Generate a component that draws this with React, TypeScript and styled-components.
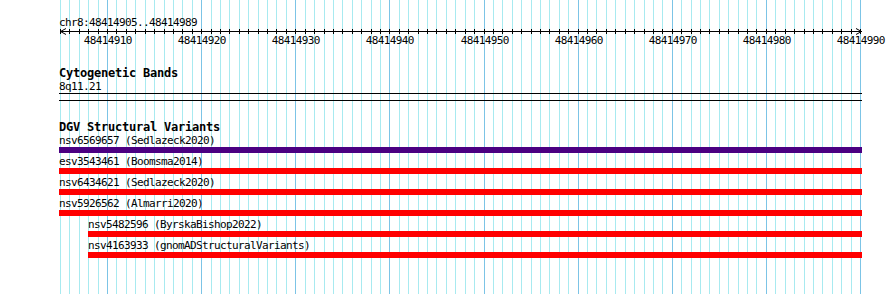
import React from "react";
import styled, { createGlobalStyle } from "styled-components";

const START = 48414905;
const ORIGIN = 60;
const BP_COUNT = 85;
const BP_WIDTH = 800 / BP_COUNT;
const TRACK_LEFT = 59;

const GlobalStyle = createGlobalStyle`
  body {
    margin: 0;
    background: #fff;
  }
`;

const Page = styled.div`
  position: relative;
  width: 890px;
  height: 294px;
  overflow: hidden;
  font-family: "DejaVu Sans Mono", "Liberation Mono", monospace;
  color: #000;
`;

const GridLayer = styled.svg`
  position: absolute;
  left: 0;
  top: 0;
  z-index: 0;
`;

const Content = styled.div`
  position: relative;
  z-index: 1;
  width: 803px;
  padding: 16px 0 0 ${TRACK_LEFT}px;
  display: flex;
  flex-direction: column;
`;

const Label = styled.div`
  font-size: 11px;
  line-height: 13px;
  letter-spacing: -0.62px;
  white-space: nowrap;
`;

const TrackTitle = styled.div`
  margin-top: 20px;
  font-size: 12px;
  font-weight: bold;
  line-height: 13px;
  letter-spacing: -0.22px;
  white-space: nowrap;
`;

const Ruler = styled.svg`
  display: block;
  overflow: visible;
`;

const BandLines = styled.div`
  height: 6px;
  border-top: 1px solid #000;
  border-bottom: 1px solid #000;
`;

const FeatureRow = styled.div<{ $indent: number }>`
  display: flex;
  flex-direction: column;
  padding-left: ${(p) => p.$indent}px;
  margin-bottom: 2px;
`;

const Bar = styled.div<{ $color: string }>`
  height: 6px;
  background: ${(p) => p.$color};
`;

const features = [
  { name: "nsv6569657 (Sedlazeck2020)", color: "#4b0082", indent: 0 },
  { name: "esv3543461 (Boomsma2014)", color: "#ff0000", indent: 0 },
  { name: "nsv6434621 (Sedlazeck2020)", color: "#ff0000", indent: 0 },
  { name: "nsv5926562 (Almarri2020)", color: "#ff0000", indent: 0 },
  { name: "nsv5482596 (ByrskaBishop2022)", color: "#ff0000", indent: 29 },
  { name: "nsv4163933 (gnomADStructuralVariants)", color: "#ff0000", indent: 29 },
];

const gridX = (k: number) => Math.round(ORIGIN + k * BP_WIDTH) + 0.5;

function Grid() {
  const lines = [];
  for (let k = 0; k <= BP_COUNT; k++) {
    const major = k % 10 === 5;
    lines.push(
      <line
        key={k}
        x1={gridX(k)}
        x2={gridX(k)}
        y1={0}
        y2={294}
        stroke={major ? "#7cc4e6" : "#a8eaf0"}
        strokeWidth={1}
      />
    );
  }
  return (
    <GridLayer width={890} height={294} shapeRendering="crispEdges">
      {lines}
    </GridLayer>
  );
}

function ScaleBar() {
  const ticks = [];
  const labels = [];
  for (let k = 0; k <= BP_COUNT; k++) {
    const x = gridX(k) - TRACK_LEFT;
    ticks.push(<line key={k} x1={x} x2={x} y1={0} y2={5} stroke="#000" />);
    if (k % 10 === 5) {
      labels.push(
        <text
          key={k}
          x={x + 0.3}
          y={15}
          textAnchor="middle"
          fontSize={11}
          letterSpacing={-0.62}
          fontFamily='"DejaVu Sans Mono", monospace'
        >
          {START + k}
        </text>
      );
    }
  }
  const left = ORIGIN - TRACK_LEFT;
  const right = 861 - TRACK_LEFT;
  return (
    <Ruler width={803} height={18}>
      <g shapeRendering="crispEdges">
        <line x1={left} x2={right + 1} y1={2.5} y2={2.5} stroke="#000" />
        {ticks}
      </g>
      <polyline
        points={`${left + 6},-0.5 ${left + 0.5},2.5 ${left + 6},5.5`}
        fill="none"
        stroke="#000"
      />
      <polyline
        points={`${right - 5},-0.5 ${right + 0.5},2.5 ${right - 5},5.5`}
        fill="none"
        stroke="#000"
      />
      {labels}
    </Ruler>
  );
}

export default function App() {
  return (
    <Page>
      <GlobalStyle />
      <Grid />
      <Content>
        <Label>chr8:48414905..48414989</Label>
        <ScaleBar />
        <TrackTitle>Cytogenetic Bands</TrackTitle>
        <Label>8q11.21</Label>
        <BandLines />
        <TrackTitle>DGV Structural Variants</TrackTitle>
        {features.map((f) => (
          <FeatureRow key={f.name} $indent={f.indent}>
            <Label>{f.name}</Label>
            <Bar $color={f.color} />
          </FeatureRow>
        ))}
      </Content>
    </Page>
  );
}
